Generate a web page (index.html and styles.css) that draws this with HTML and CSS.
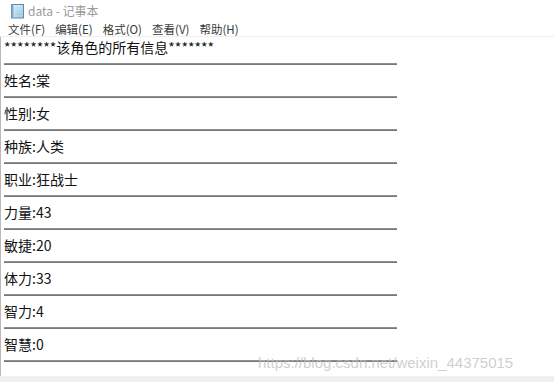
FILE: index.html
```html
<!DOCTYPE html>
<html lang="zh">
<head>
<meta charset="utf-8">
<title>data - 记事本</title>
<link rel="stylesheet" href="styles.css">
</head>
<body>
<div class="window">
  <div class="titlebar">
    <svg class="app-icon" width="15" height="16" viewBox="0 0 15 16">
      <defs>
        <linearGradient id="pad" x1="0" y1="0" x2="1" y2="1">
          <stop offset="0" stop-color="#e4f3fb"/>
          <stop offset="1" stop-color="#9fcbe6"/>
        </linearGradient>
      </defs>
      <rect x="1.5" y="1.5" width="12" height="13.5" fill="url(#pad)" stroke="#5f8aa6"/>
      <rect x="1.5" y="1.5" width="2" height="13.5" fill="#7fa9c4"/>
      <line x1="5" y1="5" x2="12" y2="5" stroke="#b6d6ea"/>
      <line x1="5" y1="8" x2="12" y2="8" stroke="#a9cde4"/>
      <line x1="5" y1="11" x2="12" y2="11" stroke="#9cc4de"/>
    </svg>
    <span class="title">data - 记事本</span>
  </div>
  <div class="menubar">
    <span class="menu-item">文件(F)</span>
    <span class="menu-item">编辑(E)</span>
    <span class="menu-item">格式(O)</span>
    <span class="menu-item">查看(V)</span>
    <span class="menu-item">帮助(H)</span>
  </div>
  <div class="editor">
    <div class="entry first"><div class="text">********该角色的所有信息*******</div><div class="rule"></div></div>
    <div class="entry"><div class="text">姓名:棠</div><div class="rule"></div></div>
    <div class="entry"><div class="text">性别:女</div><div class="rule"></div></div>
    <div class="entry"><div class="text">种族:人类</div><div class="rule"></div></div>
    <div class="entry"><div class="text">职业:狂战士</div><div class="rule"></div></div>
    <div class="entry"><div class="text">力量:43</div><div class="rule"></div></div>
    <div class="entry"><div class="text">敏捷:20</div><div class="rule"></div></div>
    <div class="entry"><div class="text">体力:33</div><div class="rule"></div></div>
    <div class="entry"><div class="text">智力:4</div><div class="rule"></div></div>
    <div class="entry"><div class="text">智慧:0</div><div class="rule"></div></div>
  </div>
  <div class="statusbar"></div>
  <div class="watermark">https://blog.csdn.net/weixin_44375015</div>
</div>
</body>
</html>
```
FILE: styles.css
```css
html, body {
  margin: 0;
  padding: 0;
  background: #ffffff;
}
.window {
  position: relative;
  width: 554px;
  height: 382px;
  overflow: hidden;
  display: flex;
  flex-direction: column;
  font-family: "Noto Sans CJK SC", "Noto Sans", sans-serif;
}
.titlebar {
  height: 21px;
  display: flex;
  align-items: center;
  padding-left: 10px;
  gap: 3px;
}
.app-icon {
  display: block;
}
.title {
  font-size: 12px;
  color: #9a9a9a;
  line-height: 14px;
}
.menubar {
  height: 15px;
  display: flex;
  align-items: center;
  padding-left: 8px;
  gap: 10px;
  border-bottom: 1px solid #efefef;
}
.menu-item {
  font-size: 11.5px;
  color: #3a3a3a;
  line-height: 14px;
}
.editor {
  flex: 1;
  border-left: 1px solid #b8b8b8;
  padding-left: 3px;
}
.entry {
  display: flex;
  flex-direction: column;
  align-items: flex-start;
  padding-top: 7px;
}
.entry.first {
  padding-top: 2px;
}
.text {
  font-size: 14px;
  line-height: 16px;
  height: 16px;
  color: #111111;
  white-space: nowrap;
}
.rule {
  margin-top: 8px;
  width: 393px;
  height: 2px;
  background: linear-gradient(#9a9a9a, #6e6e6e);
}
.statusbar {
  height: 6px;
  background: #f0f0f0;
}
.watermark {
  position: absolute;
  left: 258px;
  top: 354px;
  font-family: "Liberation Sans", Arial, sans-serif;
  font-size: 15px;
  line-height: 18px;
  color: rgba(190, 190, 190, 0.75);
  white-space: nowrap;
}
```
